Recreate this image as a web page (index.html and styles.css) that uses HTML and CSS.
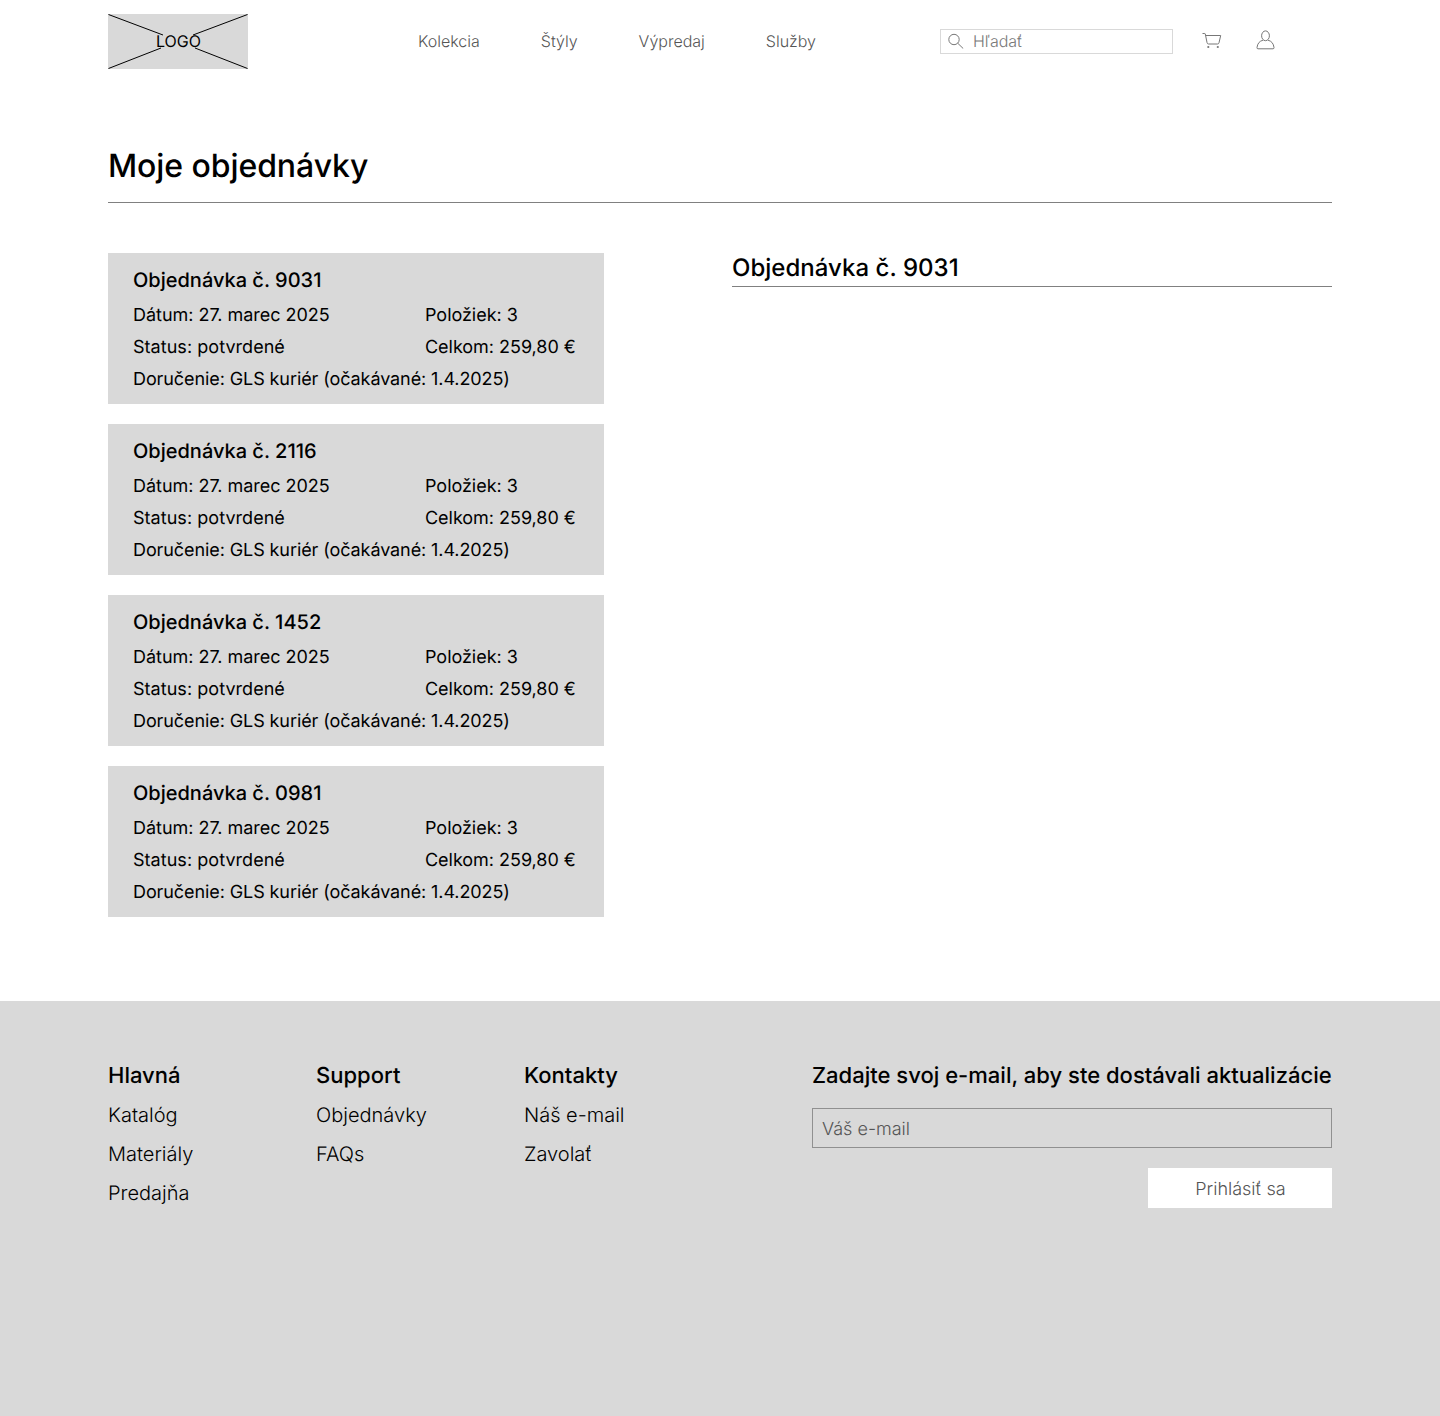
FILE: index.html
```html
<!DOCTYPE html>
<html lang="sk">
<head>
<meta charset="utf-8">
<title>Moje objednávky</title>
<link rel="stylesheet" href="styles.css">
</head>
<body>
<header class="header">
  <a class="logo"><svg class="logo-lines" width="140" height="55" viewBox="0 0 140 55" fill="none" stroke="#000"><path d="M.5 .5L55 21M139.500 .5L85 21M.5 54.500L53 34M139.500 54.500L87 34"/></svg><span class="logo-text">LOGO</span></a>
  <nav class="nav"><a>Kolekcia</a><a>Štýly</a><a>Výpredaj</a><a>Služby</a></nav>
  <div class="search"><svg width="16" height="16" viewBox="0 0 16 16" fill="none" stroke="#777"><circle cx="6" cy="6.500" r="5.200"/><path d="M9.700 10.200L15.200 15.500"/></svg><span>Hľadať</span></div>
  <svg class="cart" width="20" height="18" viewBox="0 0 20 18" fill="none" stroke="#777"><path d="M.5 1.500H2.700Q3.200 1.500 3.300 2L5 10.500Q5.300 12 6.500 12H15.500Q16.700 12 17 10.800L18.700 3.500H3.600"/><circle cx="6.300" cy="15" r="1.100" fill="#777" stroke="none"/><circle cx="15.800" cy="15" r="1.100" fill="#777" stroke="none"/></svg>
  <svg class="user" width="20" height="20" viewBox="0 0 20 20" fill="none" stroke="#777"><ellipse cx="9.500" cy="5.800" rx="3.900" ry="4.900"/><path d="M7 10.200C3.500 11 1.500 13.500 1 17.500Q.9 18.800 2 18.800H17Q18.100 18.800 18 17.500C17.500 13.500 15.500 11 12 10.200"/></svg>
</header>
<main class="main">
  <h1 class="title">Moje objednávky</h1>
  <div class="columns">
    <section class="orders">
      <article class="order"><h2>Objednávka č. 9031</h2><div class="row"><p>Dátum: 27. marec 2025</p><p>Položiek: 3</p></div><div class="row"><p class="status">Status: potvrdené</p><p>Celkom: 259,80 €</p></div><p class="delivery">Doručenie: GLS kuriér (očakávané: 1.4.2025)</p></article>
      <article class="order"><h2>Objednávka č. 2116</h2><div class="row"><p>Dátum: 27. marec 2025</p><p>Položiek: 3</p></div><div class="row"><p class="status">Status: potvrdené</p><p>Celkom: 259,80 €</p></div><p class="delivery">Doručenie: GLS kuriér (očakávané: 1.4.2025)</p></article>
      <article class="order"><h2>Objednávka č. 1452</h2><div class="row"><p>Dátum: 27. marec 2025</p><p>Položiek: 3</p></div><div class="row"><p class="status">Status: potvrdené</p><p>Celkom: 259,80 €</p></div><p class="delivery">Doručenie: GLS kuriér (očakávané: 1.4.2025)</p></article>
      <article class="order"><h2>Objednávka č. 0981</h2><div class="row"><p>Dátum: 27. marec 2025</p><p>Položiek: 3</p></div><div class="row"><p class="status">Status: potvrdené</p><p>Celkom: 259,80 €</p></div><p class="delivery">Doručenie: GLS kuriér (očakávané: 1.4.2025)</p></article>
    </section>
    <section class="detail"><h2>Objednávka č. 9031</h2></section>
  </div>
</main>
<footer class="footer">
  <div class="links"><h3>Hlavná</h3><a>Katalóg</a><a>Materiály</a><a>Predajňa</a></div>
  <div class="links"><h3>Support</h3><a>Objednávky</a><a>FAQs</a></div>
  <div class="links"><h3>Kontakty</h3><a>Náš e-mail</a><a>Zavolať</a></div>
  <form class="signup"><h3>Zadajte svoj e-mail, aby ste dostávali aktualizácie</h3><div class="email">Váš e-mail</div><button class="submit" type="button">Prihlásiť sa</button></form>
</footer>
</body>
</html>
```
FILE: styles.css
```css
* { box-sizing: border-box; margin: 0; padding: 0; }
body { font-family: Inter, sans-serif; color: #000; background: #fff; min-height: 1416px; display: flex; flex-direction: column; text-rendering: geometricPrecision; }
h1, h2, h3 { font-weight: 500; white-space: nowrap; }
.header { height: 83px; padding: 0 108px; display: flex; align-items: center; font-size: 16px; line-height: 19px; font-weight: 300; color: #555; }
.logo { width: 140px; height: 55px; display: grid; place-items: center; background: #d9d9d9; color: #000; font-weight: 400; }
.logo-lines, .logo-text { grid-area: 1 / 1; }
.logo-text { padding: 0 0 1px 1px; }
.nav { width: 398px; margin-left: 170px; padding-bottom: 1px; display: flex; justify-content: space-between; }
.search { width: 233px; height: 25px; margin-left: 124px; padding: 0 0 1px 7px; border: 1px solid #d9d9d9; display: flex; align-items: center; gap: 9px; color: #777; }
.cart { margin: 0 0 1px 29px; }
.user { margin-left: 34px; margin-bottom: 3px; }
.main { height: 918px; padding: 63px 108px 0; }
.title { height: 57px; font-size: 32px; line-height: 39px; letter-spacing: -.08px; border-bottom: 1px solid #808080; }
.columns { display: flex; justify-content: space-between; padding-top: 50px; }
.orders { width: 496px; display: grid; gap: 20px; }
.order { height: 151px; padding: 15px 25px; background: #d9d9d9; font-size: 18px; line-height: 23px; display: flex; flex-direction: column; gap: 9px; }
.order h2 { font-size: 20px; line-height: 24px; margin-bottom: 3px; }
.row { display: grid; grid-template-columns: 292px 1fr; white-space: nowrap; letter-spacing: -.03px; }
.status { letter-spacing: .04px; }
.delivery { letter-spacing: -.09px; white-space: nowrap; }
.detail { width: 600px; }
.detail h2 { height: 34px; font-size: 24px; line-height: 29px; letter-spacing: .03px; border-bottom: 1px solid #808080; }
.footer { flex: 1; padding: 62px 108px 0; background: #d9d9d9; display: flex; }
.footer h3 { font-size: 22px; line-height: 27px; letter-spacing: .01px; }
.links { width: 208px; display: flex; flex-direction: column; gap: 15px; font-size: 20px; line-height: 24px; font-weight: 300; }
.links h3 { margin-bottom: -2px; }
.signup { width: 520px; margin-left: auto; display: flex; flex-direction: column; gap: 20px; font-size: 18px; font-weight: 300; }
.signup h3 { margin-bottom: -2px; }
.email { height: 40px; padding: 1px 0 0 9px; border: 1px solid #909090; line-height: 39px; color: #555; }
.submit { width: 184px; height: 40px; padding: 2px 0 0 1px; align-self: flex-end; border: 0; background: #fff; font: inherit; color: #555; text-rendering: inherit; }
```
